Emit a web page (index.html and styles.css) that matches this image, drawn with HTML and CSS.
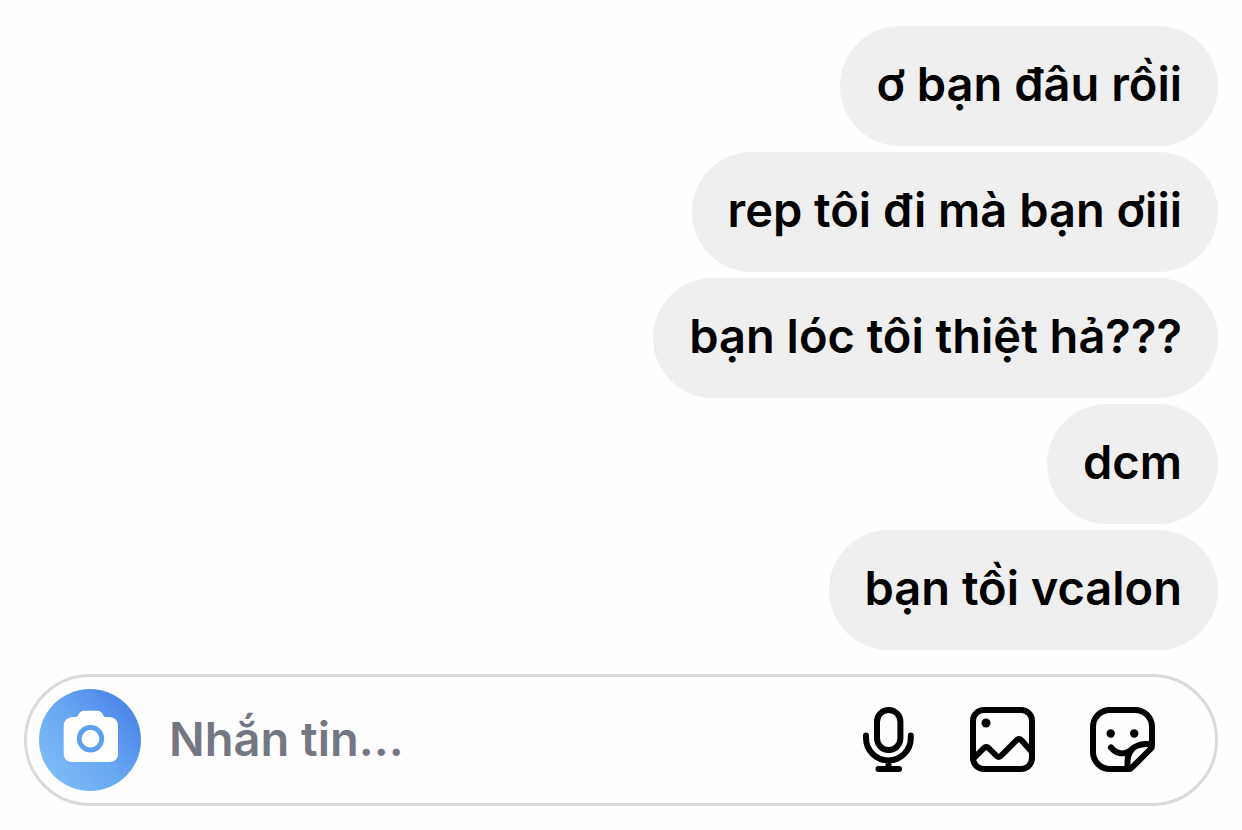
FILE: index.html
```html
<!DOCTYPE html>
<html lang="vi">
<head>
    <meta charset="UTF-8">
    <meta name="viewport" content="width=device-width, initial-scale=1.0">
    <title>Chat</title>
    <link rel="stylesheet" href="styles.css">
</head>
<body>
    <main class="chat">
        <div class="messages">
            <p class="bubble">ơ bạn đâu rồii</p>
            <p class="bubble">rep tôi đi mà bạn ơiii</p>
            <p class="bubble">bạn lóc tôi thiệt hả???</p>
            <p class="bubble">dcm</p>
            <p class="bubble">bạn tồi vcalon</p>
        </div>
        <form class="composer">
            <button class="camera-button" type="button" aria-label="Camera">
                <svg viewBox="0 0 102 102">
                    <path fill="#fff" d="M34 28h2c2 0 2.500-.6 3.500-2.500 1.500-2.700 3-3.800 6-3.800h12.500c3 0 4.500 1.100 6 3.800 1 1.900 1.500 2.500 3.500 2.500h2.500c5.500 0 9 3.500 9 9v27c0 6-3 9-9 9H34c-6 0-9.300-3-9.300-9V37c0-5.500 3.800-9 9.300-9z"/>
                    <circle cx="51.500" cy="49.700" r="11.300" fill="none" stroke="#5d9ff0" stroke-width="4.800"/>
                </svg>
            </button>
            <input class="message-input" type="text" placeholder="Nhắn tin..." aria-label="Nhắn tin">
            <div class="actions">
                <button class="icon-button" type="button" aria-label="Voice message">
                    <svg viewBox="0 0 72 72">
                        <rect x="30" y="6" width="23.400" height="40" rx="11.700"/>
                        <path d="M19 31.500v2.500a22.400 22.400 0 0 0 44.800 0v-2.500M41.500 56.500V65M31.500 65h20.500"/>
                    </svg>
                </button>
                <button class="icon-button" type="button" aria-label="Photo">
                    <svg viewBox="0 0 72 72">
                        <rect x="6" y="6" width="59" height="59" rx="11"/>
                        <circle class="dot" cx="19" cy="19" r="4.500"/>
                        <path d="M7 54l9.500-9.500q2.800-2.800 5.600 0l7 7q2.600 2.600 5.200 0l15-15q2.700-2.700 5.400 0L65 48"/>
                    </svg>
                </button>
                <button class="icon-button" type="button" aria-label="Sticker">
                    <svg viewBox="0 0 72 72">
                        <path d="M42 65H23A17 17 0 0 1 6 48V23A17 17 0 0 1 23 6h25a17 17 0 0 1 17 17v19q0 1.500-1 2.500L44.500 64q-1 1-2.500 1z"/>
                        <circle class="dot" cx="23.700" cy="29.500" r="4.200"/>
                        <circle class="dot" cx="47.200" cy="29.500" r="4.200"/>
                        <path d="M24 43.500c5 6 12 7.500 18.500 3.500 5-5 10-7.300 21.500-7.300M40.500 64v-6c0-5 1-8.500 4-12"/>
                    </svg>
                </button>
            </div>
        </form>
    </main>
</body>
</html>
```

FILE: styles.css
```css
* {
    box-sizing: border-box;
}
body {
    margin: 0;
    background-color: #fefefe;
    color: #000;
    font-family: Inter, 'Noto Sans', sans-serif;
    font-size: 47px;
    font-weight: 600;
}
.chat {
    display: flex;
    flex-direction: column;
    gap: 24px;
    padding: 26px 24px 24px;
}
.messages {
    display: flex;
    flex-direction: column;
    align-items: flex-end;
    gap: 6px;
}
.bubble {
    margin: 0;
    padding: 28px 36px 32px;
    border-radius: 60px;
    background-color: #efefef;
    line-height: 60px;
}
.composer {
    display: flex;
    align-items: center;
    gap: 28px;
    padding: 12px 56px 12px 12px;
    border: 3px solid #d9d9d9;
    border-radius: 66px;
}
button {
    flex: none;
    padding: 0;
    border: none;
    background: none;
    cursor: pointer;
}
svg {
    display: block;
    width: 100%;
    height: 100%;
}
.camera-button {
    width: 102px;
    height: 102px;
    border-radius: 50%;
    background: linear-gradient(50deg, #7ebdf7 10%, #67a6f2 50%, #4a82e7 90%);
}
.message-input {
    flex: 1;
    min-width: 0;
    height: 72px;
    padding: 0 0 4px;
    border: none;
    outline: none;
    background: none;
    font: inherit;
}
.message-input::placeholder {
    color: #737783;
    opacity: 1;
}
.actions {
    display: flex;
    gap: 48px;
}
.icon-button {
    width: 72px;
    height: 72px;
}
.icon-button svg {
    fill: none;
    stroke: #000;
    stroke-width: 6;
    stroke-linecap: round;
    stroke-linejoin: round;
}
.icon-button .dot {
    fill: #000;
    stroke: none;
}
```
